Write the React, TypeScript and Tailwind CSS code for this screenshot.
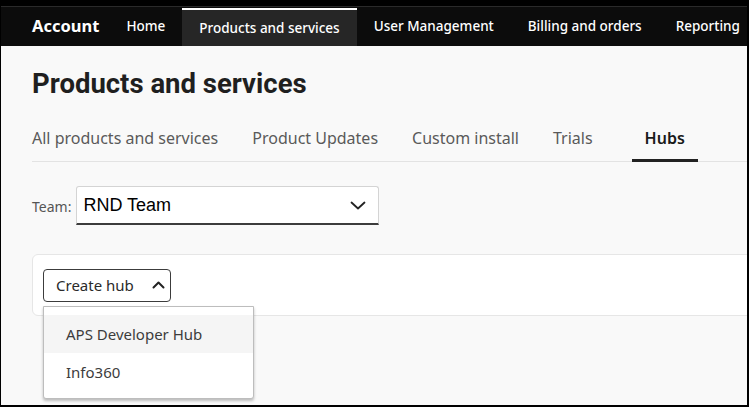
const navItems = ['Home', 'Products and services', 'User Management', 'Billing and orders', 'Reporting'];
const tabs = ['All products and services', 'Product Updates', 'Custom install', 'Trials', 'Hubs'];

const App = () => {
  return (
    <div className="w-[749px] h-[407px] overflow-hidden bg-black font-['Noto_Sans',sans-serif]">
      <div className="h-[405px] ml-px mr-[2px] flex flex-col bg-[#f9f9f9] overflow-hidden">
        {/* top strip + nav */}
        <div className="h-[7px] bg-black border-b border-[#2a2a2a] shrink-0" />
        <nav className="h-[39px] bg-[#0c0c0c] flex items-stretch shrink-0 text-white whitespace-nowrap">
          <div className="shrink-0 flex items-center pl-[31px] pr-[10px] text-[16.5px] font-bold">Account</div>
          {navItems.map((item) => (
            <div
              key={item}
              className={
                item === 'Products and services'
                  ? 'shrink-0 flex items-center px-[17px] text-[13.5px] font-medium bg-[#262626] border-t-2 border-white mt-px'
                  : 'shrink-0 flex items-center px-[17px] text-[13.5px] font-medium'
              }
            >
              {item}
            </div>
          ))}
        </nav>

        <main className="pl-[31px] w-[820px]">
          <h1 className="mt-[22px] text-[27.5px] leading-[32px] font-bold text-[#1f1f1f] font-['Roboto',sans-serif]">
            Products and services
          </h1>

          <div className="mt-[28px] flex border-b border-[#e3e3e3]">
            {tabs.map((tab) => (
              <div
                key={tab}
                className={
                  tab === 'Hubs'
                    ? 'ml-[5px] px-[13px] pb-[11px] text-[16px] leading-[20px] font-semibold text-[#1a1a1a] border-b-[3px] border-[#222] mb-[-1px]'
                    : 'mr-[34px] pb-[13px] text-[16px] leading-[20px] text-[#5a5a5a]'
                }
              >
                {tab}
              </div>
            ))}
          </div>

          <div className="mt-[24px] flex items-center gap-[5px]">
            <span className="text-[14px] text-[#555] mt-[2px]">Team:</span>
            <div className="w-[303px] h-[39px] bg-white border border-[#d4d4d4] border-b-2 border-b-[#3c3c3c] rounded-t-[3px] flex items-center justify-between pl-[6px] pr-[12px]">
              <span className="text-[18px] text-black font-['Liberation_Sans',sans-serif]">RND Team</span>
              <svg width="16" height="9" viewBox="0 0 16 9" fill="none" stroke="#222" strokeWidth="1.8" strokeLinecap="round" strokeLinejoin="round">
                <polyline points="1.5,1.5 8,7.5 14.5,1.5" />
              </svg>
            </div>
          </div>

          <div className="relative mt-[29px] h-[62px] bg-white border border-[#e6e6e6] rounded-[6px] flex items-center pl-[10px]">
            <button className="h-[33px] w-[128px] border border-[#3c3c3c] rounded-[4px] flex items-center pl-[12px] gap-[18px] text-[15px] text-[#2a2a2a]">
              Create hub
              <svg width="13" height="8" viewBox="0 0 13 8" fill="none" stroke="#222" strokeWidth="2" strokeLinecap="round" strokeLinejoin="round">
                <polyline points="1.5,6.5 6.5,1.5 11.5,6.5" />
              </svg>
            </button>

            <div className="absolute left-[10px] top-[51px] w-[211px] h-[93px] bg-white border border-[#bdbdbd] rounded-b-[3px] shadow-[0_2px_3px_rgba(0,0,0,0.25)] pt-[8px] z-10">
              <div className="h-[38px] bg-[#f5f5f5] flex items-center pl-[22px] text-[15px] text-[#3c3c3c]">
                APS Developer Hub
              </div>
              <div className="h-[38px] flex items-center pl-[22px] text-[15px] text-[#3c3c3c]">Info360</div>
            </div>
          </div>
        </main>
      </div>
    </div>
  );
};

export default App;
